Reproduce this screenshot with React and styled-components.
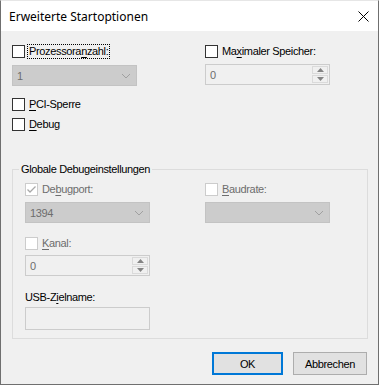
import React from "react";
import styled, { createGlobalStyle } from "styled-components";

const Global = createGlobalStyle`
  html, body { margin: 0; padding: 0; background: #fff; }
  body { font-family: "Liberation Sans", Arial, sans-serif; font-size: 11px; letter-spacing: -0.35px; }
  * { box-sizing: border-box; }
`;

const Window = styled.div`
  width: 379px;
  height: 385px;
  border: 1px solid #6f6f6f;
  border-top-color: #e6e6e6;
  display: flex;
  flex-direction: column;
  background: #f0f0f0;
  color: #000;
`;

const TitleBar = styled.div`
  height: 30px;
  flex: none;
  background: #fff;
  display: flex;
  align-items: center;
  justify-content: space-between;
  padding: 0 9px 0 8px;
  font-family: "Noto Sans", sans-serif;
  font-size: 12px;
  letter-spacing: 0;
`;

const CloseBtn = styled.div`
  width: 11px;
  height: 30px;
  display: flex;
  align-items: center;
  justify-content: center;
`;

const Body = styled.div`
  flex: 1;
  display: flex;
  flex-direction: column;
  padding: 13px 10px 0 11px;
`;

const TopGrid = styled.div`
  display: grid;
  grid-template-columns: 193px 1fr;
`;

const Col = styled.div`
  display: flex;
  flex-direction: column;
`;

const CheckRow = styled.label`
  display: flex;
  align-items: center;
  height: 15px;
  gap: 2px;
  margin-top: ${(p) => p.$mt || 0}px;
  color: ${(p) => (p.$disabled ? "#6d6d6d" : "#000")};
  white-space: nowrap;
`;

const Box = styled.span`
  width: 13px;
  height: 13px;
  border: 1px solid ${(p) => (p.$disabled ? "#cccccc" : "#333333")};
  background: #fff;
  display: flex;
  align-items: center;
  justify-content: center;
  flex: none;
`;

const LabelText = styled.span`
  padding: 0 1px;
  border: 1px dotted ${(p) => (p.$focus ? "#000" : "transparent")};
  line-height: 13px;
`;

const U = styled.span`
  text-decoration: underline;
  text-underline-offset: 2px;
`;

const Combo = styled.div`
  width: ${(p) => p.$w}px;
  height: 21px;
  margin-top: ${(p) => p.$mt || 0}px;
  background: #cccccc;
  border: 1px solid #c3c3c3;
  display: flex;
  align-items: center;
  justify-content: space-between;
  padding: 0 5px 0 4px;
  color: #6d6d6d;
`;

const Spin = styled.div`
  width: ${(p) => p.$w}px;
  height: 21px;
  margin-top: ${(p) => p.$mt || 0}px;
  border: 1px solid #cccccc;
  background: #f0f0f0;
  display: flex;
  color: #6d6d6d;
`;

const SpinValue = styled.div`
  flex: 1;
  display: flex;
  align-items: center;
  padding-left: 4px;
`;

const SpinButtons = styled.div`
  width: 17px;
  display: flex;
  flex-direction: column;
  gap: 1px;
  padding: 1px 1px 1px 0;
`;

const SpinBtn = styled.div`
  flex: 1;
  background: #f0f0f0;
  border: 1px solid #dadada;
  display: flex;
  align-items: center;
  justify-content: center;
`;

const Group = styled.div`
  position: relative;
  margin-top: 37px;
  width: 356px;
  height: 170px;
  border: 1px solid #dcdcdc;
  padding: 12px 12px 0 12px;
  display: grid;
  grid-template-columns: 180px 1fr;
  align-content: start;
`;

const Legend = styled.span`
  position: absolute;
  left: 6px;
  top: -8px;
  padding: 0 2px;
  line-height: 15px;
  background: #f0f0f0;
  color: #000;
`;

const PlainLabel = styled.div`
  margin-top: ${(p) => p.$mt || 0}px;
  height: 15px;
  line-height: 15px;
`;

const TextBox = styled.div`
  width: 125px;
  height: 23px;
  margin-top: ${(p) => p.$mt || 0}px;
  border: 1px solid #cccccc;
  background: #f0f0f0;
`;

const Footer = styled.div`
  display: flex;
  justify-content: flex-end;
  gap: 10px;
  padding: 13px 1px 0 0;
`;

const Button = styled.button`
  width: ${(p) => p.$w}px;
  height: 23px;
  font: inherit;
  letter-spacing: inherit;
  color: #000;
  background: #e1e1e1;
  border: ${(p) => (p.$default ? "2px solid #0078d7" : "1px solid #adadad")};
  padding: 0;
`;

const Chevron = () => (
  <svg width="10" height="6" viewBox="0 0 10 6">
    <path d="M1 1 L5 5 L9 1" fill="none" stroke="#a0a0a0" strokeWidth="1" />
  </svg>
);

const Tri = ({ up }) => (
  <svg width="7" height="4" viewBox="0 0 7 4">
    <path d={up ? "M0 4 L3.5 0 L7 4 Z" : "M0 0 L3.5 4 L7 0 Z"} fill="#838383" />
  </svg>
);

const Check = ({ disabled, checked, children, focus, mt }) => (
  <CheckRow $disabled={disabled} $mt={mt}>
    <Box $disabled={disabled}>
      {checked && (
        <svg width="11" height="11" viewBox="0 0 11 11">
          <path d="M1.5 5.5 L4 8 L9.5 2.5" fill="none" stroke="#a8a8a8" strokeWidth="1.3" />
        </svg>
      )}
    </Box>
    <LabelText $focus={focus}>{children}</LabelText>
  </CheckRow>
);

const SpinBox = ({ w, mt, value }) => (
  <Spin $w={w} $mt={mt}>
    <SpinValue>{value}</SpinValue>
    <SpinButtons>
      <SpinBtn><Tri up /></SpinBtn>
      <SpinBtn><Tri /></SpinBtn>
    </SpinButtons>
  </Spin>
);

export default function App() {
  return (
    <>
      <Global />
      <Window>
        <TitleBar>
          <span>Erweiterte Startoptionen</span>
          <CloseBtn>
            <svg width="11" height="11" viewBox="0 0 11 11">
              <path d="M0.5 0.5 L10.5 10.5 M10.5 0.5 L0.5 10.5" stroke="#000" strokeWidth="1" />
            </svg>
          </CloseBtn>
        </TitleBar>
        <Body>
          <TopGrid>
            <Col>
              <Check focus>Prozessora<U>n</U>zahl:</Check>
              <Combo $w={125} $mt={6}>
                <span>1</span>
                <Chevron />
              </Combo>
              <Check mt={11}><U>P</U>CI-Sperre</Check>
              <Check mt={5}><U>D</U>ebug</Check>
            </Col>
            <Col>
              <Check>Ma<U>x</U>imaler Speicher:</Check>
              <SpinBox w={125} mt={5} value="0" />
            </Col>
          </TopGrid>
          <Group>
            <Legend>Globale Debugeinstellungen</Legend>
            <Col>
              <Check disabled checked>De<U>b</U>ugport:</Check>
              <Combo $w={125} $mt={5}>
                <span>1394</span>
                <Chevron />
              </Combo>
              <Check disabled mt={13}><U>K</U>anal:</Check>
              <SpinBox w={125} mt={4} value="0" />
              <PlainLabel $mt={14}>USB-Z<U>i</U>elname:</PlainLabel>
              <TextBox $mt={2} />
            </Col>
            <Col>
              <Check disabled><U>B</U>audrate:</Check>
              <Combo $w={125} $mt={5}>
                <span></span>
                <Chevron />
              </Combo>
            </Col>
          </Group>
          <Footer>
            <Button $default $w={71}>OK</Button>
            <Button $w={74}>Abbrechen</Button>
          </Footer>
        </Body>
      </Window>
    </>
  );
}
